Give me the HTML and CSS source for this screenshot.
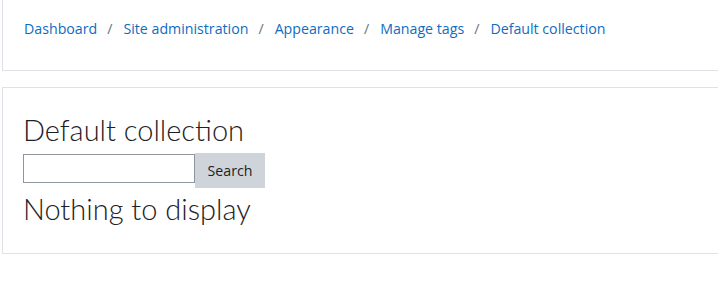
FILE: index.html
```html
<!DOCTYPE html>
<html lang="en">
<head>
  <meta charset="UTF-8">
  <title>Default collection</title>
  <link rel="stylesheet" href="styles.css">
</head>
<body>

<div class="page">
  <!-- Cabeçalho com breadcrumb -->
  <div class="card header-card">
    <nav class="breadcrumb">
      <a href="#">Dashboard</a>
      <span class="sep">/</span>
      <a href="#">Site administration</a>
      <span class="sep">/</span>
      <a href="#">Appearance</a>
      <span class="sep">/</span>
      <a href="#">Manage tags</a>
      <span class="sep">/</span>
      <a href="#">Default collection</a>
    </nav>
  </div>

  <div class="card main-card">
    <h2 class="title">Default collection</h2>
    <form class="search-form">
      <input type="text" class="search-input">
      <button type="button" class="search-btn">Search</button>
    </form>
    <h2 class="title empty">Nothing to display</h2>
  </div>
</div>

</body>
</html>
```

FILE: styles.css
```css
* {
  box-sizing: border-box;
}

body {
  margin: 0;
  background: white;
  font-family: "Open Sans", "Noto Sans", sans-serif;
  color: #1d2125;
  overflow: hidden;
}

.page {
  padding-left: 2px;
  width: 760px;
}

.card {
  border: 1px solid #dee2e6;
  background: white;
}

.header-card {
  border-top: none;
  height: 71px;
  padding: 18px 20px 0 21px;
}

.breadcrumb {
  display: flex;
  align-items: center;
  font-size: 14.2px;
  line-height: 22px;
}

.breadcrumb a {
  color: #0f6cbf;
  text-decoration: none;
}

.breadcrumb .sep {
  color: #6a737b;
  padding: 0 11px 0 10px;
}

.main-card {
  margin-top: 16px;
  height: 167px;
  padding: 25px 20px 0 20px;
}

.title {
  margin: 0;
  font-family: "Lato", "Open Sans", sans-serif;
  font-size: 29px;
  font-weight: 300;
  line-height: 34px;
  color: #1d2125;
}

.search-form {
  display: flex;
  align-items: flex-start;
  margin-top: 6px;
}

.search-input {
  width: 172px;
  height: 29px;
  margin-top: 1px;
  border: 1px solid #8f959e;
  border-radius: 0;
  padding: 0 6px;
}

.search-btn {
  height: 35px;
  width: 70px;
  border: none;
  background: #ced4da;
  color: #1d2125;
  font-family: inherit;
  font-size: 14.2px;
  padding: 0;
}

.empty {
  margin-top: 4px;
}
```
